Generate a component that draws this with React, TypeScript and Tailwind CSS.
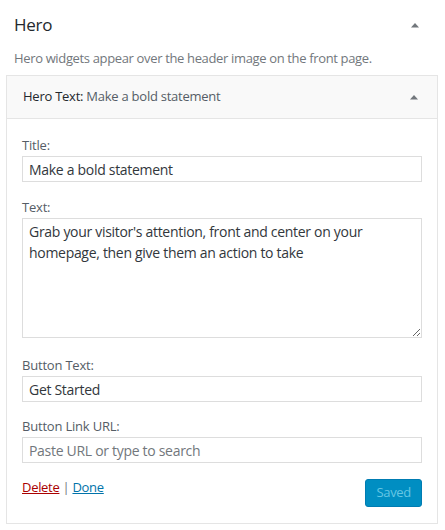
import React from "react";

const font = { fontFamily: '"Open Sans", "Noto Sans", sans-serif' };

function Tri() {
  return (
    <svg width="10" height="6" viewBox="0 0 10 6" className="block">
      <path d="M1 5.5 L5 1 L9 5.5 Z" fill="#72777c" />
    </svg>
  );
}

function Field({ label, children, mt }: { label: string; children: React.ReactNode; mt: string }) {
  return (
    <div className={mt}>
      <label className="block text-[13px] leading-[19px] text-[#555d66] tracking-[-0.2px]">{label}</label>
      <div className="mt-px">{children}</div>
    </div>
  );
}

export default function App() {
  return (
    <div className="w-[445px] h-[530px] bg-white text-[#32373c]" style={font}>
      <div className="flex items-center justify-between pl-[14px] pr-[25px] pt-[14px]">
        <h3 className="text-[17px] leading-[22px] text-[#23282d] tracking-[-0.3px]">Hero</h3>
        <Tri />
      </div>
      <p className="pl-[14px] mt-[13px] text-[13px] leading-[18px] text-[#72777c] tracking-[-0.35px]">
        Hero widgets appear over the header image on the front page.
      </p>
      <div className="mt-[8px] ml-[6px] w-[432px] border border-[#e5e5e5]">
        <div className="h-[43px] bg-[#f9f9f9] border-b border-[#e5e5e5] flex items-center justify-between pl-[16px] pr-[18px]">
          <div className="text-[13px] tracking-[-0.25px]">
            <span className="text-[#23282d]">Hero Text:</span>
            <span className="text-[#555d66]"> Make a bold statement</span>
          </div>
          <Tri />
        </div>
        <div className="px-[15px] pb-[16px]">
          <Field label="Title:" mt="mt-[17px]">
            <input
              readOnly
              value="Make a bold statement"
              className="block w-full h-[26px] border border-[#dddddd] px-[6px] text-[14px] text-[#32373c] outline-none tracking-[-0.3px]"
              style={font}
            />
          </Field>
          <Field label="Text:" mt="mt-[16px]">
            <textarea
              readOnly
              value="Grab your visitor's attention, front and center on your homepage, then give them an action to take"
              className="block w-full h-[120px] border border-[#dddddd] px-[6px] py-[2px] text-[14px] leading-[21px] text-[#32373c] outline-none resize-y tracking-[-0.3px]"
              style={font}
            />
          </Field>
          <Field label="Button Text:" mt="mt-[18px]">
            <input
              readOnly
              value="Get Started"
              className="block w-full h-[26px] border border-[#dddddd] px-[6px] text-[14px] text-[#32373c] outline-none tracking-[-0.3px]"
              style={font}
            />
          </Field>
          <Field label="Button Link URL:" mt="mt-[15px]">
            <input
              readOnly
              placeholder="Paste URL or type to search"
              className="block w-full h-[26px] border border-[#dddddd] px-[6px] text-[14px] text-[#32373c] placeholder:text-[#72777c] outline-none tracking-[-0.3px]"
              style={font}
            />
          </Field>
          <div className="mt-[15px] flex items-start justify-between">
            <div className="text-[13px] leading-[18px] tracking-[-0.3px]">
              <a className="text-[#a00] underline">Delete</a>
              <span className="text-[#72777c]"> | </span>
              <a className="text-[#0073aa] underline">Done</a>
            </div>
            <button
              disabled
              className="mt-[1px] h-[28px] px-[10px] rounded-[3px] bg-[#008ec2] text-[#66c6e4] text-[13px] tracking-[-0.3px] border border-[#007cb2]"
              style={font}
            >
              Saved
            </button>
          </div>
        </div>
      </div>
    </div>
  );
}
